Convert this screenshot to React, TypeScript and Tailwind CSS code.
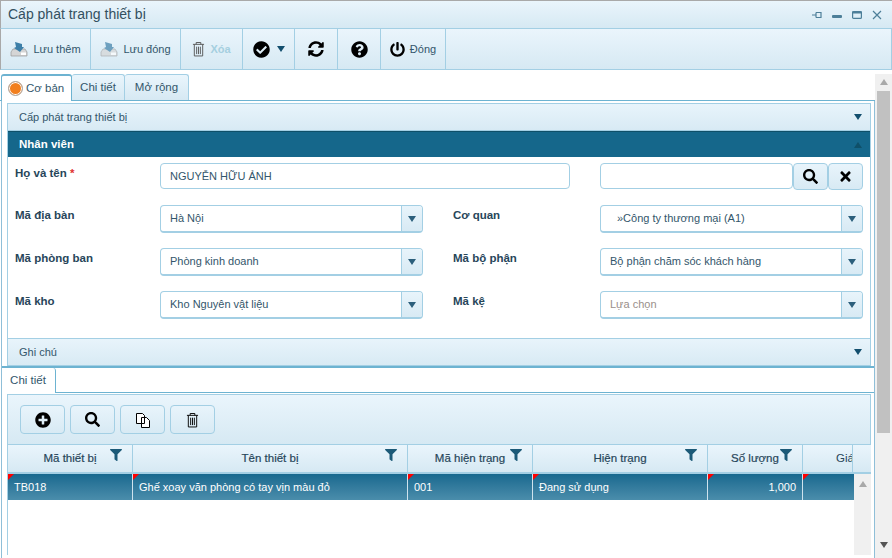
import React from "react";
import { FaCheckCircle, FaQuestionCircle, FaSyncAlt, FaPowerOff, FaSearch, FaTimes, FaPlusCircle, FaFilter } from "react-icons/fa";

const Trash = ({ className = "" }: { className?: string }) => (
  <svg viewBox="0 0 14 17" className={className} fill="none" stroke="currentColor" strokeWidth="1">
    <path d="M1 3.5h12M4.5 3.5V1.5h5v2M2.5 3.5v12.5h9V3.5M5 6v8M7 6v8M9 6v8" />
  </svg>
);
const SaveIcon = ({ faded = false }: { faded?: boolean }) => (
  <svg viewBox="0 0 18 16" className={`w-[18px] h-[16px] ${faded ? "opacity-70" : ""}`}>
    <path d="M3 8h12l2 3v4H1v-4z" fill="#d5d5d5" stroke="#9a9a9a" strokeWidth="0.7" />
    <rect x="11" y="11.5" width="5" height="2.5" fill="#fff" />
    <path d="M5 1l7 2 0 3 2 0-4 5-6-4 2-1z" fill="#3d7fa8" />
  </svg>
);
const Arrow = ({ up = false, className = "" }: { up?: boolean; className?: string }) => (
  <svg viewBox="0 0 8 6" className={`w-[8px] h-[6px] ${className}`} fill="currentColor">
    <path d={up ? "M4 0l4 6H0z" : "M0 0h8L4 6z"} />
  </svg>
);
const Sep = () => <div className="w-px self-stretch bg-[#a3cfe4]" />;

const ToolBtn = ({ w, children }: { w: string; children: React.ReactNode }) => (
  <div className={`${w} flex items-center justify-center gap-[5px] border-r border-[#a3cfe4] h-full text-[11px] text-[#33566b]`}>{children}</div>
);

const Accordion = ({ label }: { label: string }) => (
  <div className="h-[27px] flex items-center justify-between pl-[11px] pr-[8px] bg-linear-to-b from-[#e8f4fb] to-[#d8eaf4] border-b border-[#a3cfe4] text-[11px] text-[#33566b]">
    <span>{label}</span>
    <Arrow className="text-[#134f6e]" />
  </div>
);

const Label = ({ w, children }: { w: string; children: React.ReactNode }) => (
  <div className={`${w} pt-[3px] text-[11.5px] font-bold text-[#27465a] leading-[14px]`}>{children}</div>
);

const Select = ({ value, muted = false, indent = false }: { value: string; muted?: boolean; indent?: boolean }) => (
  <div className="w-[263px] h-[28px] flex border border-[#a3cfe4] border-b-2 rounded-[4px] bg-white overflow-hidden">
    <div className={`flex-1 flex items-center ${indent ? "pl-[16px]" : "pl-[9px]"} text-[11px] ${muted ? "text-[#9a8f8a]" : "text-[#33566b]"}`}>{value}</div>
    <div className="w-[21px] flex items-center justify-center border-l border-[#a3cfe4] bg-linear-to-b from-[#e8f4fb] to-[#d8eaf4]">
      <Arrow className="text-[#2c5f7c]" />
    </div>
  </div>
);

const SelectRow = ({ a, av, b, bv, muted, indent }: { a: string; av: string; b: string; bv: string; muted?: boolean; indent?: boolean }) => (
  <div className="flex h-[28px] mb-[15px]">
    <Label w="w-[145px]">{a}</Label>
    <Select value={av} />
    <div className="w-[30px]" />
    <Label w="w-[147px]">{b}</Label>
    <Select value={bv} muted={muted} indent={indent} />
  </div>
);

const GridIconBtn = ({ w, children }: { w: string; children: React.ReactNode }) => (
  <div className={`${w} h-[29px] flex items-center justify-center border border-[#a3cfe4] rounded-[4px] bg-linear-to-b from-[#e8f4fb] to-[#d8eaf4] text-black`}>{children}</div>
);

const columns = [
  { w: "w-[125px]", title: "Mã thiết bị", value: "TB018" },
  { w: "w-[275px]", title: "Tên thiết bị", value: "Ghế xoay văn phòng có tay vịn màu đỏ" },
  { w: "w-[125px]", title: "Mã hiện trạng", value: "001" },
  { w: "w-[175px]", title: "Hiện trạng", value: "Đang sử dụng" },
  { w: "w-[95px]", title: "Số lượng", value: "1,000", right: true },
];

const Corner = () => (
  <svg viewBox="0 0 6 6" className="absolute left-0 top-0 w-[6px] h-[6px]"><path d="M0 0h6L0 6z" fill="#f00" /></svg>
);

export default function App() {
  return (
    <div className="w-[892px] h-[558px] overflow-hidden bg-white flex flex-col border-t border-[#a9a9a9] font-['Liberation_Sans',Arial,sans-serif]">
      {/* title */}
      <div className="h-[27px] shrink-0 flex items-center justify-between pl-[7px] pr-[10px] bg-linear-to-b from-[#eaf5fc] to-[#d6e9f3] border-l border-[#a9a9a9]">
        <span className="text-[14px] text-[#33505f]">Cấp phát trang thiết bị</span>
        <div className="flex items-center gap-[10px] text-[#4d7f99]">
          <svg viewBox="0 0 10 10" className="w-[10px] h-[10px]" fill="none" stroke="currentColor" strokeWidth="1.2"><path d="M0 5h4M4 2.500v5M4 2.500h5v5H4M9 2.500v3" /></svg>
          <svg viewBox="0 0 10 10" className="w-[10px] h-[10px]" fill="currentColor"><rect y="5" width="10" height="3" rx="1" /></svg>
          <svg viewBox="0 0 10 10" className="w-[10px] h-[10px]" fill="none" stroke="currentColor" strokeWidth="1.2"><rect x="0.600" y="1.600" width="8.800" height="6.800" rx="1" /><path d="M0 2.500h10" strokeWidth="2" /></svg>
          <svg viewBox="0 0 10 10" className="w-[10px] h-[10px]" fill="none" stroke="currentColor" strokeWidth="1.200"><path d="M1 1l8 8M9 1l-8 8" /></svg>
        </div>
      </div>
      {/* toolbar */}
      <div className="h-[42px] shrink-0 flex bg-linear-to-b from-[#eaf5fc] to-[#d6e9f3] border border-[#a3cfe4] border-l-[#a9a9a9]">
        <ToolBtn w="w-[90px]"><SaveIcon /><span>Lưu thêm</span></ToolBtn>
        <ToolBtn w="w-[90px]"><SaveIcon faded /><span>Lưu đóng</span></ToolBtn>
        <ToolBtn w="w-[62px]"><Trash className="w-[13px] h-[16px] text-[#555]" /><span className="text-[#a5cfe0] font-bold">Xóa</span></ToolBtn>
        <ToolBtn w="w-[52px]"><FaCheckCircle className="text-[17px] text-black" /><Arrow className="text-[#134f6e] ml-[2px]" /></ToolBtn>
        <ToolBtn w="w-[43px]"><FaSyncAlt className="text-[16px] text-black" /></ToolBtn>
        <ToolBtn w="w-[43px]"><FaQuestionCircle className="text-[17px] text-black" /></ToolBtn>
        <ToolBtn w="w-[65px]"><FaPowerOff className="text-[15px] text-black" /><span>Đóng</span></ToolBtn>
      </div>
      {/* body */}
      <div className="flex-1 min-h-0 flex pt-[4px]">
        <div className="w-[875px] shrink-0 flex flex-col min-w-0">
          {/* tabs */}
          <div className="h-[27px] shrink-0 flex items-end pl-px border-b border-[#6db3d1]">
            <div className="w-[71px] h-[27px] -mb-px flex items-center gap-[3px] pl-[6px] bg-white border border-b-0 border-[#6db3d1] border-t-2 rounded-t-[3px] text-[11.500px] text-[#33566b]">
              <span className="w-[15px] h-[15px] rounded-full bg-[#f27f1e] border border-[#aaa] shadow-[inset_0_0_0_1px_#fff]" />
              <span>Cơ bản</span>
            </div>
            <div className="w-[53px] h-[26px] flex items-center justify-center bg-linear-to-b from-[#eaf5fc] to-[#d6e9f3] border-r border-t border-[#a3cfe4] rounded-t-[3px] text-[11.500px] text-[#33566b]">Chi tiết</div>
            <div className="w-[64px] h-[26px] flex items-center justify-center bg-linear-to-b from-[#eaf5fc] to-[#d6e9f3] border-r border-t border-[#a3cfe4] rounded-t-[3px] text-[11.500px] text-[#33566b]">Mở rộng</div>
          </div>
          {/* outer panel */}
          <div className="flex-1 min-h-0 flex flex-col border-x border-[#8fbfd8] ml-px overflow-hidden">
            <div className="h-[265px] shrink-0 pt-[2px] pl-[5px] pr-[3px]">
              <div className="h-full flex flex-col border-x border-t border-[#a3cfe4]">
                <Accordion label="Cấp phát trang thiết bị" />
                <div className="h-[26px] shrink-0 flex items-center justify-between pl-[11px] pr-[8px] bg-[#15678b] border-t border-[#0f5069] text-[11.500px] font-bold text-white">
                  <span>Nhân viên</span>
                  <Arrow up className="text-[#0f5069]" />
                </div>
                <div className="flex-1 min-h-0 pt-[6px] pl-[7px] pr-[6px]">
                  <div className="flex h-[27px] mb-[15px]">
                    <Label w="w-[145px]">Họ và tên <span className="text-[#e03030]">*</span></Label>
                    <div className="w-[410px] h-[26px] flex items-center pl-[9px] border border-[#a3cfe4] rounded-[4px] text-[11px] text-[#33566b]">NGUYỄN HỮU ẢNH</div>
                    <div className="w-[30px]" />
                    <div className="w-[193px] h-[26px] border border-[#a3cfe4] rounded-[4px]" />
                    <div className="w-[35px] h-[27px] flex items-center justify-center border border-[#a3cfe4] rounded-[4px] bg-linear-to-b from-[#e8f4fb] to-[#d8eaf4]"><FaSearch className="text-[15px] text-black" /></div>
                    <div className="w-[35px] h-[27px] flex items-center justify-center border border-[#a3cfe4] rounded-[4px] bg-linear-to-b from-[#e8f4fb] to-[#d8eaf4]"><FaTimes className="text-[15px] text-black" /></div>
                  </div>
                  <SelectRow a="Mã địa bàn" av="Hà Nội" b="Cơ quan" bv="»Công ty thương mại (A1)" indent />
                  <SelectRow a="Mã phòng ban" av="Phòng kinh doanh" b="Mã bộ phận" bv="Bộ phận chăm sóc khách hàng" />
                  <SelectRow a="Mã kho" av="Kho Nguyên vật liệu" b="Mã kệ" bv="Lựa chọn" muted />
                </div>
                <div className="border-t border-[#a3cfe4]"><Accordion label="Ghi chú" /></div>
              </div>
            </div>
            {/* lower section */}
            <div className="flex-1 min-h-0 flex flex-col border-t-2 border-[#6db3d1] -ml-px">
              <div className="h-[25px] shrink-0 flex border-b border-[#6db3d1]">
                <div className="w-[55px] h-[25px] flex items-center justify-center bg-white border-r border-[#6db3d1] rounded-tr-[3px] text-[11.500px] text-[#33566b]">Chi tiết</div>
              </div>
              <div className="flex-1 min-h-0 flex flex-col pl-[6px] pr-[3px] pt-px">
                <div className="h-[51px] shrink-0 flex items-center gap-[5px] pl-[12px] bg-linear-to-b from-[#eaf5fc] to-[#d6e9f3] border border-[#a3cfe4]">
                  <GridIconBtn w="w-[45px]"><FaPlusCircle className="text-[16px]" /></GridIconBtn>
                  <GridIconBtn w="w-[45px]"><FaSearch className="text-[15px]" /></GridIconBtn>
                  <GridIconBtn w="w-[45px]">
                    <svg viewBox="0 0 16 16" className="w-[16px] h-[16px]" fill="white" stroke="black"><path d="M1.500 1.500h6l2 2v8h-8zM6.500 5.500h5l3 3v7h-8z" /></svg>
                  </GridIconBtn>
                  <GridIconBtn w="w-[45px]"><Trash className="w-[13px] h-[16px]" /></GridIconBtn>
                </div>
                <div className="flex-1 min-h-0 flex flex-col border-l border-[#a3cfe4] mb-[3px] overflow-hidden">
                  <div className="h-[29px] shrink-0 flex bg-linear-to-b from-[#eaf5fc] to-[#d6e9f3] border-b-2 border-[#a3cfe4]">
                    {columns.map((c) => (
                      <div key={c.title} className={`${c.w} shrink-0 relative flex items-center justify-center border-r border-[#a3cfe4] text-[11.500px] font-bold text-[#27465a]`}>
                        <span className="font-normal [-webkit-text-stroke:0.2px]">{c.title}</span>
                        <FaFilter className="absolute right-[10px] top-[4px] text-[12px] text-[#1c5a78]" />
                      </div>
                    ))}
                    <div className="w-[50px] shrink-0 overflow-hidden border-r border-[#a3cfe4] flex items-center pl-[33px] text-[11.500px] text-[#27465a] whitespace-nowrap">Giá</div>
                  </div>
                  <div className="flex-1 min-h-0 flex">
                    <div className="flex-1 min-w-0">
                      <div className="h-[26px] flex bg-linear-to-b from-[#17698f] to-[#4a8dab] text-[11px] text-white">
                        {columns.map((c) => (
                          <div key={c.title} className={`${c.w} shrink-0 relative flex items-center px-[6px] border-r border-[#cfe3ee] ${c.right ? "justify-end" : ""}`}>
                            <Corner />
                            <span>{c.value}</span>
                          </div>
                        ))}
                        <div className="flex-1 relative"><Corner /></div>
                      </div>
                    </div>
                    <div className="w-[17px] shrink-0 bg-[#f0f0f0] pt-[7px] flex justify-center text-[#a9a9a9]"><Arrow up /></div>
                  </div>
                </div>
              </div>
            </div>
          </div>
        </div>
        {/* page scrollbar */}
        <div className="w-[17px] shrink-0 flex flex-col items-center bg-[#f0f0f0] pt-[5px]">
          <Arrow up className="text-[#a9a9a9]" />
          <div className="w-[13px] h-[342px] mt-[6px] bg-[#c1c1c1]" />
          <div className="flex-1" />
          <Arrow className="text-[#555] mb-[10px]" />
        </div>
      </div>
    </div>
  );
}
